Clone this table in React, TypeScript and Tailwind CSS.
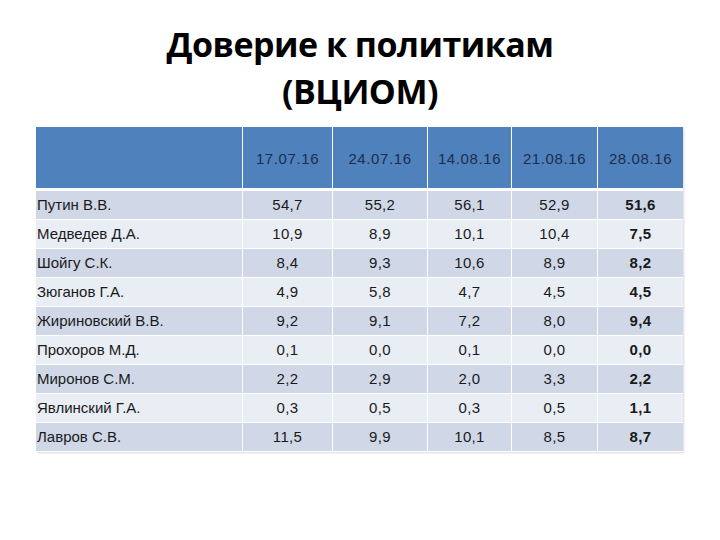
import React from 'react';

const dates = ['17.07.16', '24.07.16', '14.08.16', '21.08.16', '28.08.16'];

const rows: [string, string[]][] = [
  ['Путин В.В.', ['54,7', '55,2', '56,1', '52,9', '51,6']],
  ['Медведев Д.А.', ['10,9', '8,9', '10,1', '10,4', '7,5']],
  ['Шойгу С.К.', ['8,4', '9,3', '10,6', '8,9', '8,2']],
  ['Зюганов Г.А.', ['4,9', '5,8', '4,7', '4,5', '4,5']],
  ['Жириновский В.В.', ['9,2', '9,1', '7,2', '8,0', '9,4']],
  ['Прохоров М.Д.', ['0,1', '0,0', '0,1', '0,0', '0,0']],
  ['Миронов С.М.', ['2,2', '2,9', '2,0', '3,3', '2,2']],
  ['Явлинский Г.А.', ['0,3', '0,5', '0,3', '0,5', '1,1']],
  ['Лавров С.В.', ['11,5', '9,9', '10,1', '8,5', '8,7']],
];

const cols = 'grid grid-cols-[206px_90px_95px_84px_86px_86px]';

const App = () => {
  return (
    <div className="w-[720px] h-[540px] bg-white overflow-hidden">
      {/* title */}
      <div className="pt-[21px] h-[127px] text-center font-['Open_Sans',sans-serif] font-bold text-[34px] leading-[47px] text-black tracking-[-0.5px]">
        <div>Доверие к политикам</div>
        <div>(ВЦИОМ)</div>
      </div>

      <div className="ml-[36px] w-[647px] font-['Liberation_Sans',sans-serif] text-[15px] shadow-[1px_1px_2px_rgba(0,0,0,0.15)]">
        <div className={`${cols} h-[61px] bg-[#4f81bd] text-[#1d2d4d] tracking-[0.6px]`}>
          <div />
          {dates.map((d) => (
            <div key={d} className="flex items-center justify-center pt-[4px] border-l border-white">
              {d}
            </div>
          ))}
        </div>

        <div className="mt-[3px]">
          {rows.map(([name, vals], i) => (
            <div
              key={name}
              className={`${cols} h-[29px] border-b border-white text-[#1a1a1a] ${i % 2 === 0 ? 'bg-[#d0d8e8]' : 'bg-[#e9edf4]'}`}
            >
              <div className="flex items-center pl-[1px]">{name}</div>
              {vals.map((v, j) => (
                <div
                  key={j}
                  className={`flex items-center justify-center border-l border-white tracking-[0.3px] ${j === 4 ? 'font-bold' : ''}`}
                >
                  {v}
                </div>
              ))}
            </div>
          ))}
        </div>
      </div>
    </div>
  );
};

export default App;
